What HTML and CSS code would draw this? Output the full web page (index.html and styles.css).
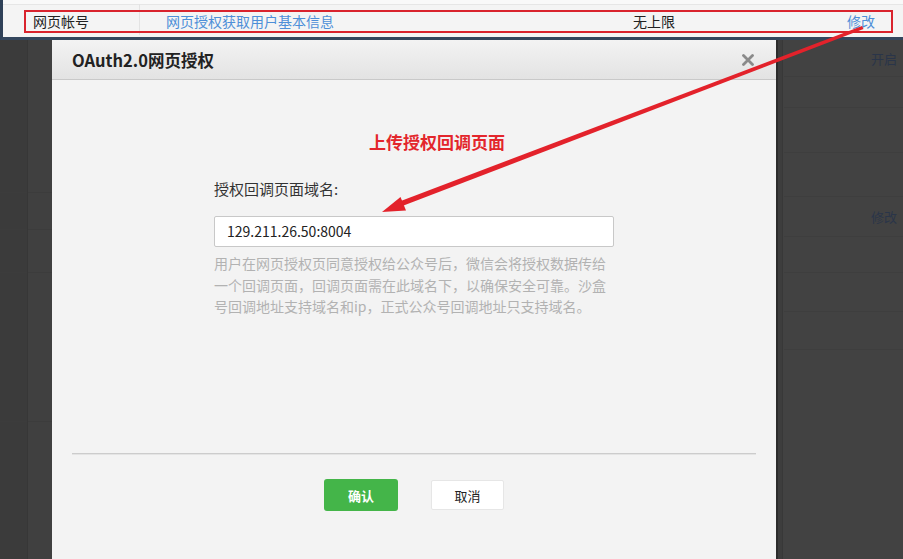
FILE: index.html
```html
<!DOCTYPE html>
<html lang="zh-CN">
<head>
<meta charset="utf-8">
<title>OAuth2.0网页授权</title>
<link rel="stylesheet" href="styles.css">
</head>
<body>
<div class="page">
  <div class="strip">
    <div class="prev-row"></div>
    <div class="row">
      <div class="cell c1">网页帐号</div>
      <div class="cell c2"><a class="link">网页授权获取用户基本信息</a></div>
      <div class="cell c3">无上限</div>
      <div class="cell c4"><a class="link">修改</a></div>
    </div>
  </div>
  <div class="stage">
    <div class="gutter-left">
      <div class="gcol gcol-a">
        <div class="grow g1"></div><div class="grow g2"></div><div class="grow g3"></div><div class="grow g4"></div>
      </div>
      <div class="gcol gcol-b">
        <div class="grow g1"></div><div class="grow g2"></div><div class="grow g3"></div><div class="grow g4"></div>
      </div>
    </div>
    <div class="modal">
      <div class="modal-head">
        <h3 class="modal-title">OAuth2.0网页授权</h3>
        <svg class="close" width="12" height="12" viewBox="0 0 12 12"><path d="M1.5 1.5L10.5 10.5M10.5 1.5L1.5 10.5" stroke="#8a8a8a" stroke-width="2.8" stroke-linecap="round"/></svg>
      </div>
      <div class="modal-body">
        <div class="note">上传授权回调页面</div>
        <div class="form">
          <label class="label">授权回调页面域名:</label>
          <div class="input">129.211.26.50:8004</div>
          <p class="help">用户在网页授权页同意授权给公众号后，微信会将授权数据传给<br>一个回调页面，回调页面需在此域名下，以确保安全可靠。沙盒<br>号回调地址支持域名和ip，正式公众号回调地址只支持域名。</p>
        </div>
      </div>
      <div class="divider"></div>
      <div class="modal-foot">
        <button class="btn btn-ok">确认</button>
        <button class="btn btn-cancel">取消</button>
      </div>
    </div>
    <div class="gutter-right">
      <div class="rrow r1"><span class="dimtext">开启</span></div>
      <div class="rrow r2"></div>
      <div class="rrow r3"></div>
      <div class="rrow r4"></div>
      <div class="rrow r5"><span class="dimtext">修改</span></div>
      <div class="rrow r6"></div>
      <div class="rrow r7"></div>
      <div class="rrow r8"></div>
    </div>
  </div>
  <svg class="annot" width="903" height="559" viewBox="0 0 903 559">
    <rect x="25" y="11" width="867" height="21" fill="none" stroke="#d9232d" stroke-width="2"/>
    <polygon points="862,26 863.5,29 401,206.5 399.5,201.5" fill="#e3222b"/>
    <polygon points="382,212 400.5,197 406,210.5" fill="#e3222b"/>
  </svg>
</div>
</body>
</html>
```

FILE: styles.css
```css
* { box-sizing: border-box; }
html, body { margin: 0; padding: 0; }
body {
  width: 903px;
  height: 559px;
  overflow: hidden;
  background: #3e3e3e;
  font-family: "Noto Sans CJK SC", "Microsoft YaHei", sans-serif;
  color: #333;
}
.page { position: relative; width: 903px; height: 559px; }

/* top table strip */
.strip {
  height: 40px;
  background: #f4f4f4;
  border-left: 3px solid #2f4158;
  border-bottom: 3px solid #33465d;
}
.prev-row {
  height: 5px;
  background: #f9f9f9;
  border-bottom: 1px solid #e6e6e6;
}
.row {
  display: flex;
  height: 31px;
  font-size: 14px;
  line-height: 31px;
  margin-top: -1px;
}
.cell { height: 100%; white-space: nowrap; padding-top: 2px; line-height: 30px; }
.c1 { width: 137px; padding-left: 30px; border-right: 1px solid #e3e3e3; color: #222; }
.c2 { width: 441px; padding-left: 26px; }
.c3 { width: 146px; text-align: center; color: #222; }
.c4 { flex: 1; padding-left: 120px; }
.link { color: #4d8fd8; }

/* stage under overlay */
.stage {
  display: flex;
  height: 519px;
}
.gutter-left {
  width: 52px;
  display: flex;
}
.gcol { display: flex; flex-direction: column; }
.gcol-a { width: 28px; background: #3b3b3b; border-right: 1px solid #373737; }
.gcol-b { flex: 1; background: #404040; }
.grow { border-bottom: 1px solid #3c3c3c; }
.g1 { height: 153px; }
.g2 { height: 37px; }
.g3 { height: 43px; }
.g4 { height: 149px; }

.modal {
  width: 724px;
  height: 519px;
  background: #f3f3f3;
  display: flex;
  flex-direction: column;
}
.modal-head {
  height: 40px;
  flex: none;
  display: flex;
  align-items: center;
  justify-content: space-between;
  padding: 0 22px 0 20px;
  background: linear-gradient(#f3f3f3, #e3e3e3);
  border-bottom: 1px solid #c9c9c9;
}
.modal-title {
  margin: 0;
  font-size: 16.5px;
  font-weight: 700;
  color: #222;
  line-height: 40px;
}
.close { display: block; }

.modal-body {
  height: 373px;
  flex: none;
  padding-top: 50px;
}
.note {
  padding-left: 317px;
  font-size: 17px;
  font-weight: 700;
  color: #e3262c;
  line-height: 24px;
}
.form {
  margin-left: 162px;
  width: 400px;
  margin-top: 24px;
}
.label {
  display: block;
  font-size: 15px;
  line-height: 22px;
  color: #333;
}
.input {
  margin-top: 16px;
  width: 400px;
  height: 31px;
  background: #fff;
  border: 1px solid #c8c8c8;
  border-radius: 2px;
  padding-left: 12px;
  font-size: 14px;
  line-height: 29px;
  color: #222;
}
.help {
  margin: 6px 0 0;
  font-size: 14px;
  line-height: 21.5px;
  color: #b2b2b2;
  white-space: nowrap;
}
.divider {
  margin: 0 20px;
  height: 1px;
  background: #cccccc;
  box-shadow: 0 1px 0 #e4e4e4;
  flex: none;
}
.modal-foot {
  display: flex;
  justify-content: center;
  align-items: flex-start;
  gap: 33px;
  padding-top: 25px;
}
.btn {
  font-family: "Noto Sans CJK SC", "Microsoft YaHei", sans-serif;
  font-size: 13px;
  border-radius: 3px;
  padding: 0;
  cursor: pointer;
}
.btn-ok {
  width: 74px;
  height: 32px;
  background: #44b549;
  border: none;
  color: #fff;
  font-weight: 700;
}
.btn-cancel {
  width: 73px;
  height: 30px;
  margin-top: 1px;
  background: #fff;
  border: 1px solid #e6e6e6;
  color: #222;
  border-radius: 2px;
}

.gutter-right {
  flex: 1;
  display: flex;
  flex-direction: column;
  background: #424242;
  border-left: 2px solid #2c2c2c;
  box-shadow: inset 4px 0 0 #3d3d3d, inset 5px 0 0 #383838;
  padding-left: 6px;
}
.rrow { border-bottom: 1px solid #3e3e3e; display: flex; align-items: center; justify-content: flex-end; padding-right: 6px; }
.r1 { height: 37px; }
.r2 { height: 31px; }
.r3 { height: 45px; }
.r4 { height: 44px; }
.r5 { height: 40px; }
.r6 { height: 36px; }
.r7 { height: 39px; }
.r8 { height: 38px; }
.dimtext { font-size: 13px; color: #2a3549; }

.annot {
  position: absolute;
  left: 0;
  top: 0;
  pointer-events: none;
}
```
